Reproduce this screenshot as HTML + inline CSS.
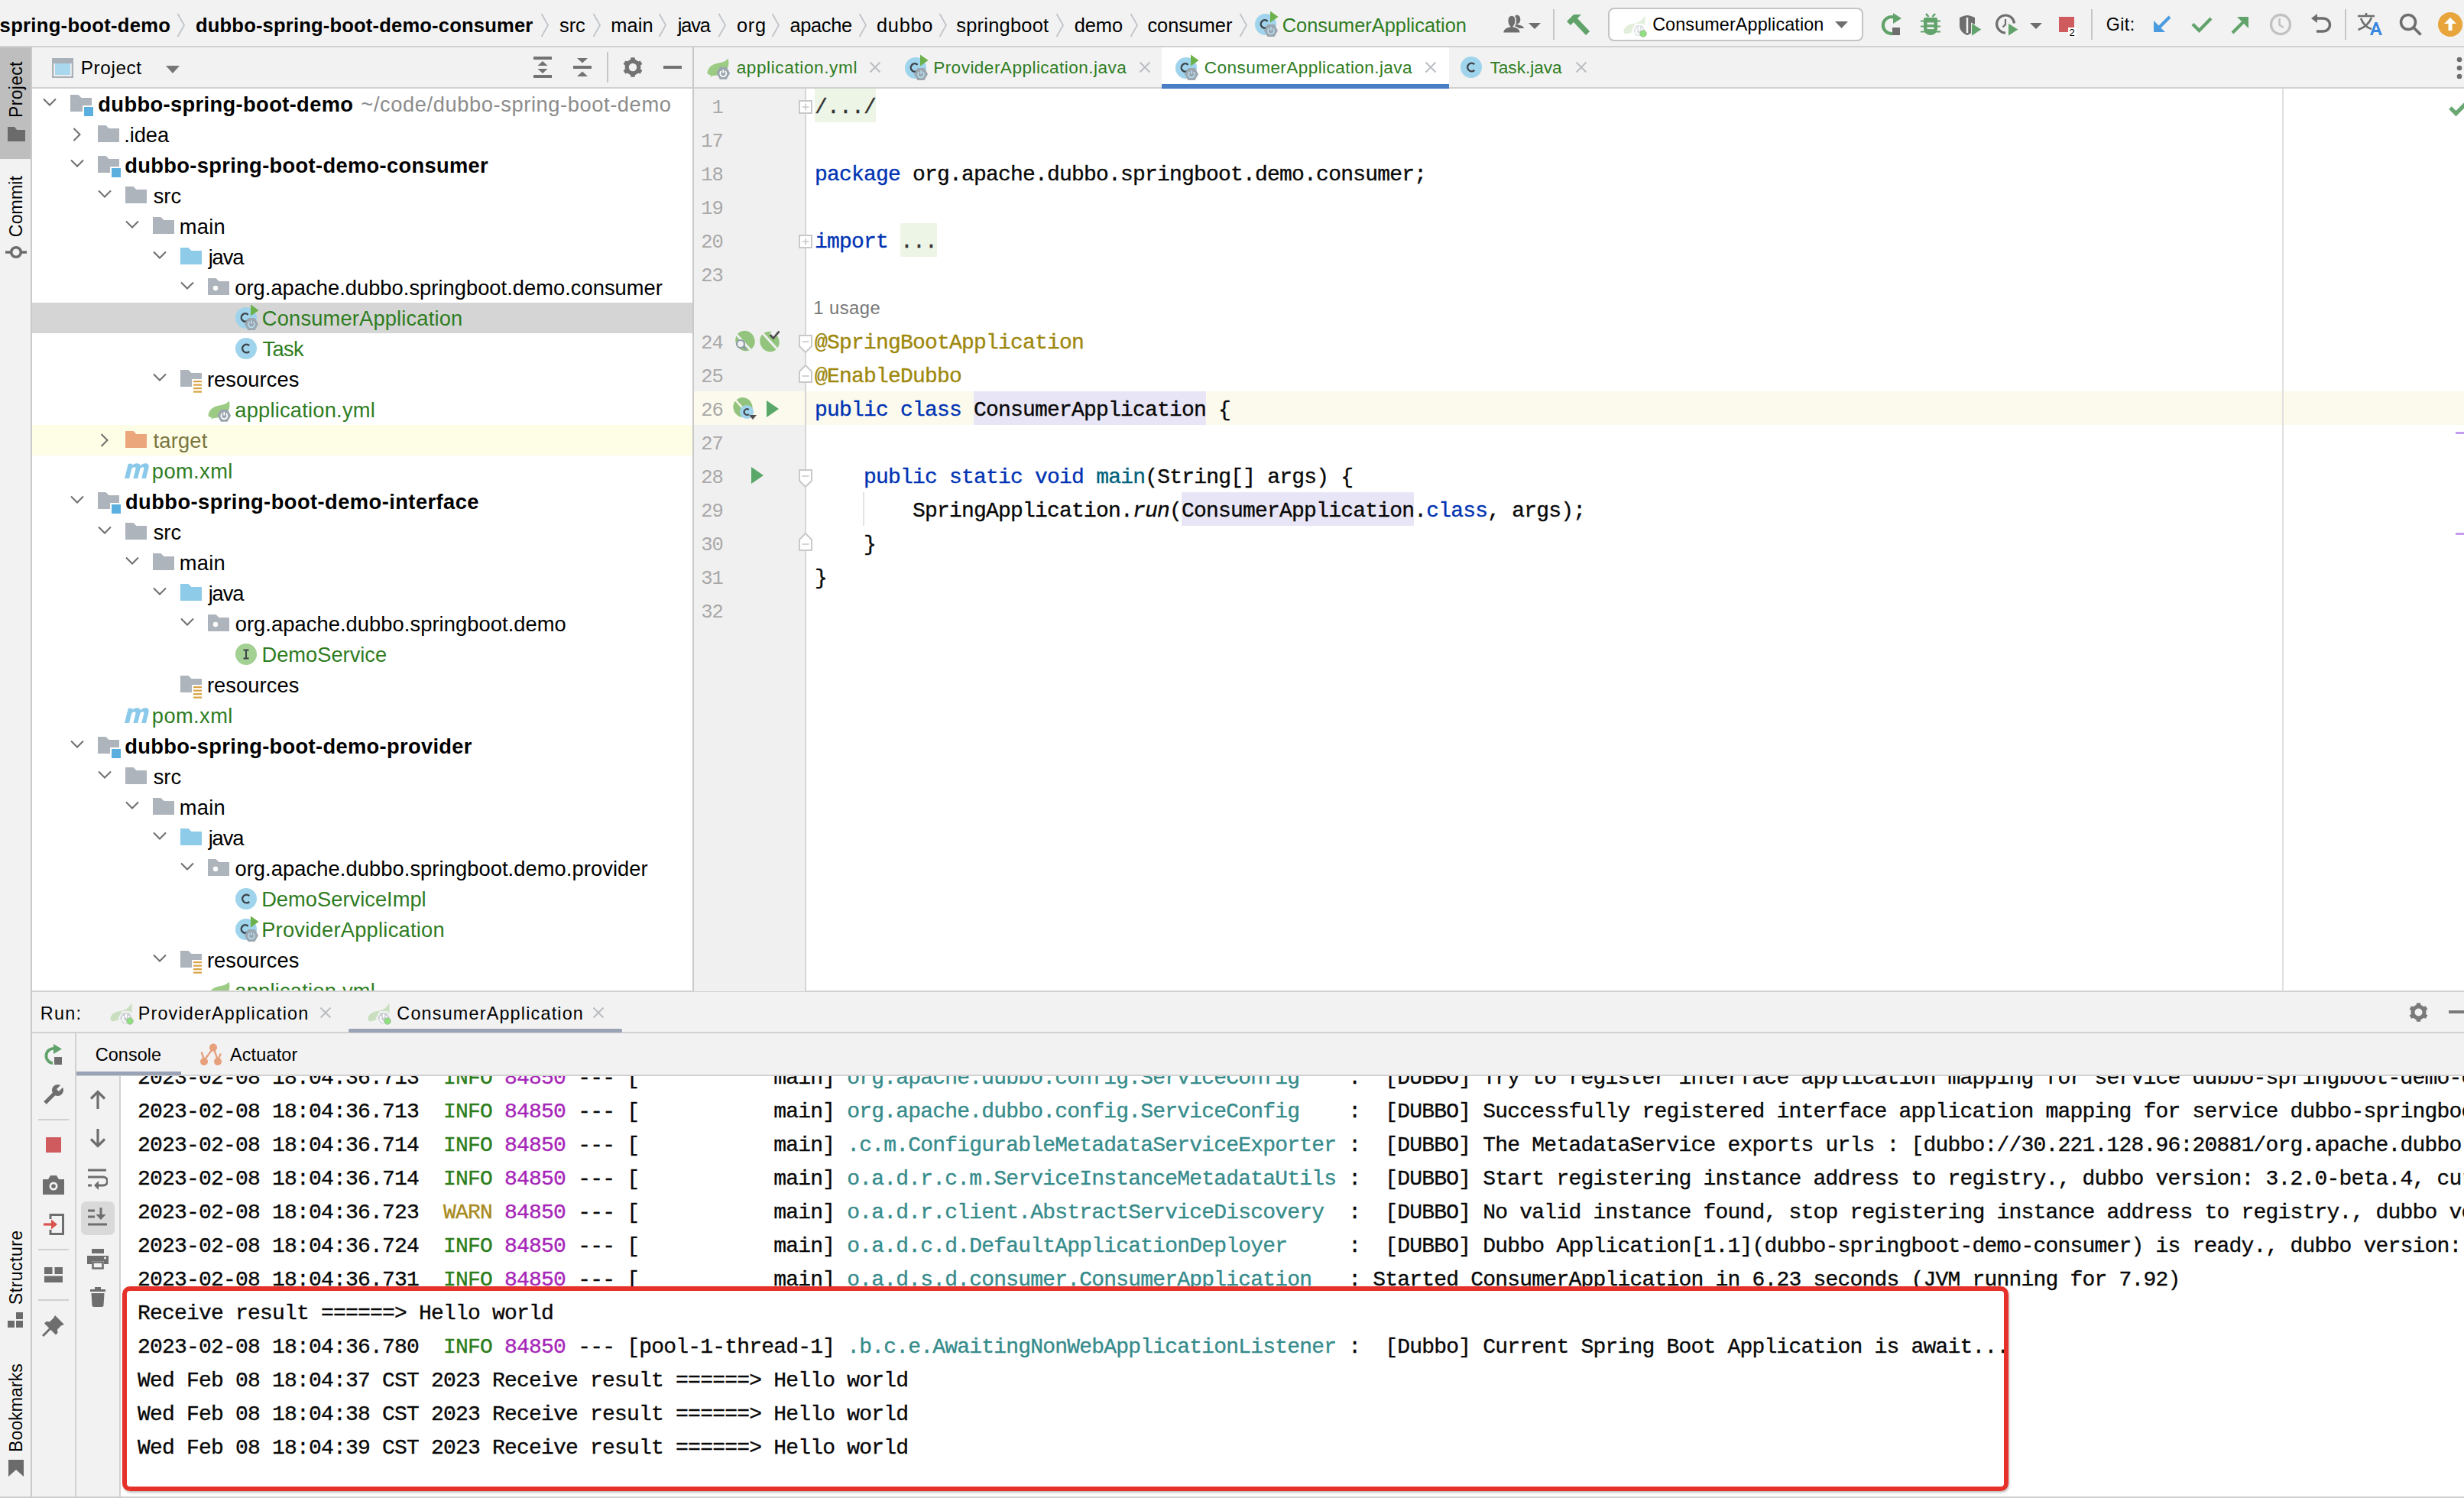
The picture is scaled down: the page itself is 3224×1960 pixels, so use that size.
<!DOCTYPE html>
<html><head><meta charset="utf-8"><style>
html,body{margin:0;padding:0;}
body{width:3224px;height:1960px;overflow:hidden;position:relative;background:#f2f2f2;font-family:'Liberation Sans',sans-serif;}
div,svg{position:absolute;}
.t{white-space:pre;line-height:normal;}
.m{-webkit-text-stroke:0.35px currentColor;}
</style></head><body>
<div style="left:0px;top:0px;width:3224px;height:60px;background:#f2f2f2;"></div>
<div style="left:0px;top:60px;width:3224px;height:2px;background:#d1d1d1;"></div>
<div style="left:0px;top:62px;width:40px;height:1896px;background:#f2f2f2;"></div>
<div style="left:40px;top:62px;width:2px;height:1896px;background:#c9c9c9;"></div>
<div style="left:0px;top:62px;width:40px;height:146px;background:#bebebe;"></div>
<div style="left:42px;top:62px;width:864px;height:53px;background:#f2f2f2;"></div>
<div style="left:42px;top:114px;width:864px;height:2px;background:#d1d1d1;"></div>
<div style="left:42px;top:116px;width:864px;height:1181px;background:#ffffff;"></div>
<div style="left:906px;top:62px;width:2px;height:1235px;background:#c9c9c9;"></div>
<div style="left:908px;top:62px;width:2316px;height:52px;background:#f2f2f2;"></div>
<div style="left:908px;top:114px;width:2316px;height:2px;background:#d1d1d1;"></div>
<div style="left:908px;top:116px;width:2316px;height:1181px;background:#ffffff;"></div>
<div style="left:42px;top:1296px;width:3182px;height:2px;background:#d1d1d1;"></div>
<div style="left:42px;top:1298px;width:3182px;height:52px;background:#f2f2f2;"></div>
<div style="left:42px;top:1350px;width:3182px;height:2px;background:#d1d1d1;"></div>
<div style="left:42px;top:1352px;width:58px;height:606px;background:#f2f2f2;"></div>
<div style="left:98px;top:1352px;width:2px;height:606px;background:#d1d1d1;"></div>
<div style="left:100px;top:1352px;width:3124px;height:54px;background:#f2f2f2;"></div>
<div style="left:100px;top:1406px;width:3124px;height:2px;background:#d1d1d1;"></div>
<div style="left:100px;top:1408px;width:57px;height:550px;background:#f2f2f2;"></div>
<div style="left:156px;top:1408px;width:2px;height:550px;background:#d1d1d1;"></div>
<div style="left:158px;top:1408px;width:3066px;height:550px;background:#ffffff;"></div>
<div style="left:0px;top:1958px;width:3224px;height:2px;background:#cfcfcf;"></div>
<div class="t" style="left:-0.39600000000000013px;top:18.95px;font-family:'Liberation Sans', sans-serif;font-size:25.6px;color:#000;font-weight:bold;letter-spacing:0.294px;">spring-boot-demo</div>
<svg style="left:231px;top:17px;" width="12" height="32" viewBox="0 0 12 32"><path d="M1.5 1 L10 16 L1.5 31" fill="none" stroke="#bfc4ca" stroke-width="1.8"/></svg>
<div class="t" style="left:255.976px;top:18.95px;font-family:'Liberation Sans', sans-serif;font-size:25.6px;color:#000;font-weight:bold;letter-spacing:0.160px;">dubbo-spring-boot-demo-consumer</div>
<svg style="left:707px;top:17px;" width="12" height="32" viewBox="0 0 12 32"><path d="M1.5 1 L10 16 L1.5 31" fill="none" stroke="#bfc4ca" stroke-width="1.8"/></svg>
<div class="t" style="left:732.1015px;top:19.13px;font-family:'Liberation Sans', sans-serif;font-size:25.4px;color:#000;font-weight:normal;letter-spacing:-0.124px;">src</div>
<svg style="left:775px;top:17px;" width="12" height="32" viewBox="0 0 12 32"><path d="M1.5 1 L10 16 L1.5 31" fill="none" stroke="#bfc4ca" stroke-width="1.8"/></svg>
<div class="t" style="left:799.2855px;top:19.13px;font-family:'Liberation Sans', sans-serif;font-size:25.4px;color:#000;font-weight:normal;letter-spacing:0.083px;">main</div>
<svg style="left:861px;top:17px;" width="12" height="32" viewBox="0 0 12 32"><path d="M1.5 1 L10 16 L1.5 31" fill="none" stroke="#bfc4ca" stroke-width="1.8"/></svg>
<div class="t" style="left:886.635px;top:19.13px;font-family:'Liberation Sans', sans-serif;font-size:25.4px;color:#000;font-weight:normal;letter-spacing:-1.081px;">java</div>
<svg style="left:939px;top:17px;" width="12" height="32" viewBox="0 0 12 32"><path d="M1.5 1 L10 16 L1.5 31" fill="none" stroke="#bfc4ca" stroke-width="1.8"/></svg>
<div class="t" style="left:963.9205px;top:19.13px;font-family:'Liberation Sans', sans-serif;font-size:25.4px;color:#000;font-weight:normal;letter-spacing:0.782px;">org</div>
<svg style="left:1009px;top:17px;" width="12" height="32" viewBox="0 0 12 32"><path d="M1.5 1 L10 16 L1.5 31" fill="none" stroke="#bfc4ca" stroke-width="1.8"/></svg>
<div class="t" style="left:1033.6205px;top:19.13px;font-family:'Liberation Sans', sans-serif;font-size:25.4px;color:#000;font-weight:normal;letter-spacing:-0.371px;">apache</div>
<svg style="left:1123px;top:17px;" width="12" height="32" viewBox="0 0 12 32"><path d="M1.5 1 L10 16 L1.5 31" fill="none" stroke="#bfc4ca" stroke-width="1.8"/></svg>
<div class="t" style="left:1146.9205px;top:19.13px;font-family:'Liberation Sans', sans-serif;font-size:25.4px;color:#000;font-weight:normal;letter-spacing:0.746px;">dubbo</div>
<svg style="left:1228px;top:17px;" width="12" height="32" viewBox="0 0 12 32"><path d="M1.5 1 L10 16 L1.5 31" fill="none" stroke="#bfc4ca" stroke-width="1.8"/></svg>
<div class="t" style="left:1251.3015px;top:19.13px;font-family:'Liberation Sans', sans-serif;font-size:25.4px;color:#000;font-weight:normal;letter-spacing:0.252px;">springboot</div>
<svg style="left:1381px;top:17px;" width="12" height="32" viewBox="0 0 12 32"><path d="M1.5 1 L10 16 L1.5 31" fill="none" stroke="#bfc4ca" stroke-width="1.8"/></svg>
<div class="t" style="left:1405.7205px;top:19.13px;font-family:'Liberation Sans', sans-serif;font-size:25.4px;color:#000;font-weight:normal;letter-spacing:-0.068px;">demo</div>
<svg style="left:1478px;top:17px;" width="12" height="32" viewBox="0 0 12 32"><path d="M1.5 1 L10 16 L1.5 31" fill="none" stroke="#bfc4ca" stroke-width="1.8"/></svg>
<div class="t" style="left:1501.5204999999999px;top:19.13px;font-family:'Liberation Sans', sans-serif;font-size:25.4px;color:#000;font-weight:normal;letter-spacing:-0.092px;">consumer</div>
<svg style="left:1621px;top:17px;" width="12" height="32" viewBox="0 0 12 32"><path d="M1.5 1 L10 16 L1.5 31" fill="none" stroke="#bfc4ca" stroke-width="1.8"/></svg>
<div class="t" style="left:1677.73px;top:19.13px;font-family:'Liberation Sans', sans-serif;font-size:25.4px;color:#2f7d1f;font-weight:normal;letter-spacing:-0.004px;">ConsumerApplication</div>
<div class="t" style="left:2755.84px;top:19.16px;font-family:'Liberation Sans', sans-serif;font-size:23.2px;color:#000;font-weight:normal;letter-spacing:0.391px;">Git:</div>
<div style="left:2104px;top:10px;width:334px;height:44px;background:#ffffff;border:2px solid #c4c4c4;border-radius:8px;box-sizing:border-box;"></div>
<div class="t" style="left:2162.13px;top:18.97px;font-family:'Liberation Sans', sans-serif;font-size:23.4px;color:#000;font-weight:normal;letter-spacing:0.106px;">ConsumerApplication</div>
<div class="t" style="left:105.79525px;top:75.44px;font-family:'Liberation Sans', sans-serif;font-size:24.3px;color:#000;font-weight:normal;letter-spacing:0.609px;">Project</div>
<div style="left:42px;top:396px;width:864px;height:40px;background:#d5d5d5;"></div>
<div style="left:42px;top:556px;width:864px;height:40px;background:#fefde6;"></div>
<div style="left:0;top:0;width:906px;height:1296px;overflow:hidden">
<svg style="left:56px;top:128px;" width="18" height="12" viewBox="0 0 18 12"><path d="M1 1.5 L9 9.5 L17 1.5" fill="none" stroke="#6e6e6e" stroke-width="2"/></svg>
<svg style="left:92px;top:124px;" width="32" height="30" viewBox="0 0 32 30"><path d="M0 0 H10.5 L14.5 4 H28 V14 H16 V22 H0 Z" fill="#aeb4bc"/><rect x="18" y="16" width="12" height="12" fill="#5aafde"/></svg>
<div class="t" style="left:128.308px;top:121.18px;font-family:'Liberation Sans', sans-serif;font-size:27.3px;color:#000;font-weight:bold;letter-spacing:0.369px;">dubbo-spring-boot-demo</div>
<div class="t" style="left:472.3715px;top:121.18px;font-family:'Liberation Sans', sans-serif;font-size:27.3px;color:#8c8c8c;font-weight:normal;letter-spacing:0.582px;">~/code/dubbo-spring-boot-demo</div>
<svg style="left:95px;top:167px;" width="12" height="18" viewBox="0 0 12 18"><path d="M1.5 1 L9.5 9 L1.5 17" fill="none" stroke="#6e6e6e" stroke-width="2"/></svg>
<svg style="left:128px;top:164px;" width="28" height="22" viewBox="0 0 28 22"><path d="M0 0 H10.5 L14.5 4 H28 V22 H0 Z" fill="#aeb4bc"/></svg>
<div class="t" style="left:162.143px;top:161.18px;font-family:'Liberation Sans', sans-serif;font-size:27.3px;color:#000;font-weight:normal;letter-spacing:-0.046px;">.idea</div>
<svg style="left:92px;top:208px;" width="18" height="12" viewBox="0 0 18 12"><path d="M1 1.5 L9 9.5 L17 1.5" fill="none" stroke="#6e6e6e" stroke-width="2"/></svg>
<svg style="left:128px;top:204px;" width="32" height="30" viewBox="0 0 32 30"><path d="M0 0 H10.5 L14.5 4 H28 V14 H16 V22 H0 Z" fill="#aeb4bc"/><rect x="18" y="16" width="12" height="12" fill="#5aafde"/></svg>
<div class="t" style="left:163.308px;top:201.18px;font-family:'Liberation Sans', sans-serif;font-size:27.3px;color:#000;font-weight:bold;letter-spacing:0.330px;">dubbo-spring-boot-demo-consumer</div>
<svg style="left:128px;top:248px;" width="18" height="12" viewBox="0 0 18 12"><path d="M1 1.5 L9 9.5 L17 1.5" fill="none" stroke="#6e6e6e" stroke-width="2"/></svg>
<svg style="left:164px;top:244px;" width="28" height="22" viewBox="0 0 28 22"><path d="M0 0 H10.5 L14.5 4 H28 V22 H0 Z" fill="#aeb4bc"/></svg>
<div class="t" style="left:200.74925px;top:241.18px;font-family:'Liberation Sans', sans-serif;font-size:27.3px;color:#000;font-weight:normal;letter-spacing:-0.038px;">src</div>
<svg style="left:164px;top:288px;" width="18" height="12" viewBox="0 0 18 12"><path d="M1 1.5 L9 9.5 L17 1.5" fill="none" stroke="#6e6e6e" stroke-width="2"/></svg>
<svg style="left:200px;top:284px;" width="28" height="22" viewBox="0 0 28 22"><path d="M0 0 H10.5 L14.5 4 H28 V22 H0 Z" fill="#aeb4bc"/></svg>
<div class="t" style="left:234.75725px;top:281.18px;font-family:'Liberation Sans', sans-serif;font-size:27.3px;color:#000;font-weight:normal;letter-spacing:0.259px;">main</div>
<svg style="left:200px;top:328px;" width="18" height="12" viewBox="0 0 18 12"><path d="M1 1.5 L9 9.5 L17 1.5" fill="none" stroke="#6e6e6e" stroke-width="2"/></svg>
<svg style="left:236px;top:324px;" width="28" height="22" viewBox="0 0 28 22"><path d="M0 0 H10.5 L14.5 4 H28 V22 H0 Z" fill="#8ecbe9"/></svg>
<div class="t" style="left:272.6825px;top:321.18px;font-family:'Liberation Sans', sans-serif;font-size:27.3px;color:#000;font-weight:normal;letter-spacing:-1.126px;">java</div>
<svg style="left:236px;top:368px;" width="18" height="12" viewBox="0 0 18 12"><path d="M1 1.5 L9 9.5 L17 1.5" fill="none" stroke="#6e6e6e" stroke-width="2"/></svg>
<svg style="left:272px;top:364px;" width="28" height="22" viewBox="0 0 28 22"><path d="M0 0 H10.5 L14.5 4 H28 V22 H0 Z" fill="#aeb4bc"/><circle cx="10" cy="13" r="3.2" fill="#fff"/></svg>
<div class="t" style="left:307.23974999999996px;top:361.18px;font-family:'Liberation Sans', sans-serif;font-size:27.3px;color:#000;font-weight:normal;letter-spacing:0.030px;">org.apache.dubbo.springboot.demo.consumer</div>
<svg style="left:308px;top:398px;" width="34" height="36" viewBox="0 0 34 36"><circle cx="14" cy="18" r="14" fill="#9fd4ec"/><path d="M16.6 13.8 A5.2 5.2 0 1 0 16.6 21.2" fill="none" stroke="#3d4248" stroke-width="2.4"/><path d="M20 0.5 L30.5 8 L20 15.5 Z" fill="#6cb14b"/><path d="M12 26 L16.5 18 L25.5 18 L30 26 L25.5 34 L16.5 34 Z" fill="#9ba6af"/><path d="M18.6 23.2 A4 4 0 1 0 23.4 23.2" fill="none" stroke="#b5dbef" stroke-width="1.7"/><path d="M21 21.2 V25.8" stroke="#b5dbef" stroke-width="1.7"/></svg>
<div class="t" style="left:342.835px;top:401.18px;font-family:'Liberation Sans', sans-serif;font-size:27.3px;color:#2f7d1f;font-weight:normal;letter-spacing:0.160px;">ConsumerApplication</div>
<svg style="left:308px;top:442px;" width="28" height="28" viewBox="0 0 28 28"><circle cx="14" cy="14" r="14" fill="#9fd4ec"/><path d="M18.2 10.2 A5.3 5.3 0 1 0 18.2 17.8" fill="none" stroke="#3d4248" stroke-width="2.4"/></svg>
<div class="t" style="left:343.58574999999996px;top:441.18px;font-family:'Liberation Sans', sans-serif;font-size:27.3px;color:#2f7d1f;font-weight:normal;letter-spacing:-0.662px;">Task</div>
<svg style="left:200px;top:488px;" width="18" height="12" viewBox="0 0 18 12"><path d="M1 1.5 L9 9.5 L17 1.5" fill="none" stroke="#6e6e6e" stroke-width="2"/></svg>
<svg style="left:236px;top:484px;" width="32" height="30" viewBox="0 0 32 30"><path d="M0 0 H10.5 L14.5 4 H28 V12 H15 V22 H0 Z" fill="#aeb4bc"/><g fill="#d9a343"><rect x="17" y="14" width="11" height="2.2"/><rect x="17" y="18.5" width="11" height="2.2"/><rect x="17" y="23" width="11" height="2.2"/><rect x="17" y="27.5" width="11" height="2.2"/></g></svg>
<div class="t" style="left:270.9255px;top:481.18px;font-family:'Liberation Sans', sans-serif;font-size:27.3px;color:#000;font-weight:normal;letter-spacing:0.073px;">resources</div>
<svg style="left:272px;top:523px;" width="32" height="30" viewBox="0 0 32 30"><path d="M0.5 21 C1 13 7 9 15 7.5 C21 6.5 25 5 27.5 1.5 C29.5 7 28.5 14 24 18 C20 21.5 14 24 8 24 L4 25.5 L5 23 C3 23 1.5 22.5 0.5 21 Z" fill="#9ccb84"/><path d="M12.5 20.8 L16.9 12.8 L25.7 12.8 L30.1 20.8 L25.7 28.8 L16.9 28.8 Z" fill="#9ba6af"/><path d="M18.9 18 A4 4 0 1 0 23.7 18" fill="none" stroke="#fff" stroke-width="1.7"/><path d="M21.3 16 V20.6" stroke="#fff" stroke-width="1.7"/></svg>
<div class="t" style="left:307.23974999999996px;top:521.18px;font-family:'Liberation Sans', sans-serif;font-size:27.3px;color:#2f7d1f;font-weight:normal;letter-spacing:0.215px;">application.yml</div>
<svg style="left:131px;top:567px;" width="12" height="18" viewBox="0 0 12 18"><path d="M1.5 1 L9.5 9 L1.5 17" fill="none" stroke="#6e6e6e" stroke-width="2"/></svg>
<svg style="left:164px;top:564px;" width="28" height="22" viewBox="0 0 28 22"><path d="M0 0 H10.5 L14.5 4 H28 V22 H0 Z" fill="#eba77b"/></svg>
<div class="t" style="left:200.4905px;top:561.18px;font-family:'Liberation Sans', sans-serif;font-size:27.3px;color:#7b7640;font-weight:normal;letter-spacing:0.199px;">target</div>
<svg style="left:162.5px;top:606px;" width="34" height="20" viewBox="0 0 34 20"><path transform="translate(5 0) skewX(-14)" d="M0 20 V0.8 H5.6 V3 C7 1.3 9 0.3 11.5 0.3 C14 0.3 15.6 1.5 16.5 3.2 C18 1.3 20 0.3 22.5 0.3 C26 0.3 28 2.5 28 6.5 V20 H22.2 V8 C22.2 6.2 21.4 5.3 20 5.3 C18.5 5.3 17.2 6.4 17.2 8.2 V20 H11.4 V8 C11.4 6.2 10.6 5.3 9.2 5.3 C7.7 5.3 6.1 6.4 6.1 8.2 V20 Z" fill="#8ac9e9"/></svg>
<div class="t" style="left:198.8255px;top:601.18px;font-family:'Liberation Sans', sans-serif;font-size:27.3px;color:#2f7d1f;font-weight:normal;letter-spacing:0.399px;">pom.xml</div>
<svg style="left:92px;top:648px;" width="18" height="12" viewBox="0 0 18 12"><path d="M1 1.5 L9 9.5 L17 1.5" fill="none" stroke="#6e6e6e" stroke-width="2"/></svg>
<svg style="left:128px;top:644px;" width="32" height="30" viewBox="0 0 32 30"><path d="M0 0 H10.5 L14.5 4 H28 V14 H16 V22 H0 Z" fill="#aeb4bc"/><rect x="18" y="16" width="12" height="12" fill="#5aafde"/></svg>
<div class="t" style="left:163.908px;top:641.18px;font-family:'Liberation Sans', sans-serif;font-size:27.3px;color:#000;font-weight:bold;letter-spacing:0.445px;">dubbo-spring-boot-demo-interface</div>
<svg style="left:128px;top:688px;" width="18" height="12" viewBox="0 0 18 12"><path d="M1 1.5 L9 9.5 L17 1.5" fill="none" stroke="#6e6e6e" stroke-width="2"/></svg>
<svg style="left:164px;top:684px;" width="28" height="22" viewBox="0 0 28 22"><path d="M0 0 H10.5 L14.5 4 H28 V22 H0 Z" fill="#aeb4bc"/></svg>
<div class="t" style="left:200.74925px;top:681.18px;font-family:'Liberation Sans', sans-serif;font-size:27.3px;color:#000;font-weight:normal;letter-spacing:-0.038px;">src</div>
<svg style="left:164px;top:728px;" width="18" height="12" viewBox="0 0 18 12"><path d="M1 1.5 L9 9.5 L17 1.5" fill="none" stroke="#6e6e6e" stroke-width="2"/></svg>
<svg style="left:200px;top:724px;" width="28" height="22" viewBox="0 0 28 22"><path d="M0 0 H10.5 L14.5 4 H28 V22 H0 Z" fill="#aeb4bc"/></svg>
<div class="t" style="left:234.75725px;top:721.18px;font-family:'Liberation Sans', sans-serif;font-size:27.3px;color:#000;font-weight:normal;letter-spacing:0.259px;">main</div>
<svg style="left:200px;top:768px;" width="18" height="12" viewBox="0 0 18 12"><path d="M1 1.5 L9 9.5 L17 1.5" fill="none" stroke="#6e6e6e" stroke-width="2"/></svg>
<svg style="left:236px;top:764px;" width="28" height="22" viewBox="0 0 28 22"><path d="M0 0 H10.5 L14.5 4 H28 V22 H0 Z" fill="#8ecbe9"/></svg>
<div class="t" style="left:272.6825px;top:761.18px;font-family:'Liberation Sans', sans-serif;font-size:27.3px;color:#000;font-weight:normal;letter-spacing:-1.126px;">java</div>
<svg style="left:236px;top:808px;" width="18" height="12" viewBox="0 0 18 12"><path d="M1 1.5 L9 9.5 L17 1.5" fill="none" stroke="#6e6e6e" stroke-width="2"/></svg>
<svg style="left:272px;top:804px;" width="28" height="22" viewBox="0 0 28 22"><path d="M0 0 H10.5 L14.5 4 H28 V22 H0 Z" fill="#aeb4bc"/><circle cx="10" cy="13" r="3.2" fill="#fff"/></svg>
<div class="t" style="left:307.63975px;top:801.18px;font-family:'Liberation Sans', sans-serif;font-size:27.3px;color:#000;font-weight:normal;letter-spacing:0.070px;">org.apache.dubbo.springboot.demo</div>
<svg style="left:308px;top:842px;" width="28" height="28" viewBox="0 0 28 28"><circle cx="14" cy="14" r="14" fill="#a3d193"/><path d="M10.5 8.5 H17.5 M14 8.5 V19.5 M10.5 19.5 H17.5" stroke="#3d4248" stroke-width="2"/></svg>
<div class="t" style="left:342.44775px;top:841.18px;font-family:'Liberation Sans', sans-serif;font-size:27.3px;color:#2f7d1f;font-weight:normal;letter-spacing:-0.009px;">DemoService</div>
<svg style="left:236px;top:884px;" width="32" height="30" viewBox="0 0 32 30"><path d="M0 0 H10.5 L14.5 4 H28 V12 H15 V22 H0 Z" fill="#aeb4bc"/><g fill="#d9a343"><rect x="17" y="14" width="11" height="2.2"/><rect x="17" y="18.5" width="11" height="2.2"/><rect x="17" y="23" width="11" height="2.2"/><rect x="17" y="27.5" width="11" height="2.2"/></g></svg>
<div class="t" style="left:270.9255px;top:881.18px;font-family:'Liberation Sans', sans-serif;font-size:27.3px;color:#000;font-weight:normal;letter-spacing:0.073px;">resources</div>
<svg style="left:162.5px;top:926px;" width="34" height="20" viewBox="0 0 34 20"><path transform="translate(5 0) skewX(-14)" d="M0 20 V0.8 H5.6 V3 C7 1.3 9 0.3 11.5 0.3 C14 0.3 15.6 1.5 16.5 3.2 C18 1.3 20 0.3 22.5 0.3 C26 0.3 28 2.5 28 6.5 V20 H22.2 V8 C22.2 6.2 21.4 5.3 20 5.3 C18.5 5.3 17.2 6.4 17.2 8.2 V20 H11.4 V8 C11.4 6.2 10.6 5.3 9.2 5.3 C7.7 5.3 6.1 6.4 6.1 8.2 V20 Z" fill="#8ac9e9"/></svg>
<div class="t" style="left:198.8255px;top:921.18px;font-family:'Liberation Sans', sans-serif;font-size:27.3px;color:#2f7d1f;font-weight:normal;letter-spacing:0.399px;">pom.xml</div>
<svg style="left:92px;top:968px;" width="18" height="12" viewBox="0 0 18 12"><path d="M1 1.5 L9 9.5 L17 1.5" fill="none" stroke="#6e6e6e" stroke-width="2"/></svg>
<svg style="left:128px;top:964px;" width="32" height="30" viewBox="0 0 32 30"><path d="M0 0 H10.5 L14.5 4 H28 V14 H16 V22 H0 Z" fill="#aeb4bc"/><rect x="18" y="16" width="12" height="12" fill="#5aafde"/></svg>
<div class="t" style="left:163.308px;top:961.18px;font-family:'Liberation Sans', sans-serif;font-size:27.3px;color:#000;font-weight:bold;letter-spacing:0.331px;">dubbo-spring-boot-demo-provider</div>
<svg style="left:128px;top:1008px;" width="18" height="12" viewBox="0 0 18 12"><path d="M1 1.5 L9 9.5 L17 1.5" fill="none" stroke="#6e6e6e" stroke-width="2"/></svg>
<svg style="left:164px;top:1004px;" width="28" height="22" viewBox="0 0 28 22"><path d="M0 0 H10.5 L14.5 4 H28 V22 H0 Z" fill="#aeb4bc"/></svg>
<div class="t" style="left:200.74925px;top:1001.18px;font-family:'Liberation Sans', sans-serif;font-size:27.3px;color:#000;font-weight:normal;letter-spacing:-0.038px;">src</div>
<svg style="left:164px;top:1048px;" width="18" height="12" viewBox="0 0 18 12"><path d="M1 1.5 L9 9.5 L17 1.5" fill="none" stroke="#6e6e6e" stroke-width="2"/></svg>
<svg style="left:200px;top:1044px;" width="28" height="22" viewBox="0 0 28 22"><path d="M0 0 H10.5 L14.5 4 H28 V22 H0 Z" fill="#aeb4bc"/></svg>
<div class="t" style="left:234.75725px;top:1041.18px;font-family:'Liberation Sans', sans-serif;font-size:27.3px;color:#000;font-weight:normal;letter-spacing:0.259px;">main</div>
<svg style="left:200px;top:1088px;" width="18" height="12" viewBox="0 0 18 12"><path d="M1 1.5 L9 9.5 L17 1.5" fill="none" stroke="#6e6e6e" stroke-width="2"/></svg>
<svg style="left:236px;top:1084px;" width="28" height="22" viewBox="0 0 28 22"><path d="M0 0 H10.5 L14.5 4 H28 V22 H0 Z" fill="#8ecbe9"/></svg>
<div class="t" style="left:272.6825px;top:1081.18px;font-family:'Liberation Sans', sans-serif;font-size:27.3px;color:#000;font-weight:normal;letter-spacing:-1.126px;">java</div>
<svg style="left:236px;top:1128px;" width="18" height="12" viewBox="0 0 18 12"><path d="M1 1.5 L9 9.5 L17 1.5" fill="none" stroke="#6e6e6e" stroke-width="2"/></svg>
<svg style="left:272px;top:1124px;" width="28" height="22" viewBox="0 0 28 22"><path d="M0 0 H10.5 L14.5 4 H28 V22 H0 Z" fill="#aeb4bc"/><circle cx="10" cy="13" r="3.2" fill="#fff"/></svg>
<div class="t" style="left:307.43975px;top:1121.18px;font-family:'Liberation Sans', sans-serif;font-size:27.3px;color:#000;font-weight:normal;letter-spacing:0.075px;">org.apache.dubbo.springboot.demo.provider</div>
<svg style="left:308px;top:1162px;" width="28" height="28" viewBox="0 0 28 28"><circle cx="14" cy="14" r="14" fill="#9fd4ec"/><path d="M18.2 10.2 A5.3 5.3 0 1 0 18.2 17.8" fill="none" stroke="#3d4248" stroke-width="2.4"/></svg>
<div class="t" style="left:342.14775px;top:1161.18px;font-family:'Liberation Sans', sans-serif;font-size:27.3px;color:#2f7d1f;font-weight:normal;letter-spacing:0.009px;">DemoServiceImpl</div>
<svg style="left:308px;top:1198px;" width="34" height="36" viewBox="0 0 34 36"><circle cx="14" cy="18" r="14" fill="#9fd4ec"/><path d="M16.6 13.8 A5.2 5.2 0 1 0 16.6 21.2" fill="none" stroke="#3d4248" stroke-width="2.4"/><path d="M20 0.5 L30.5 8 L20 15.5 Z" fill="#6cb14b"/><path d="M12 26 L16.5 18 L25.5 18 L30 26 L25.5 34 L16.5 34 Z" fill="#9ba6af"/><path d="M18.6 23.2 A4 4 0 1 0 23.4 23.2" fill="none" stroke="#b5dbef" stroke-width="1.7"/><path d="M21 21.2 V25.8" stroke="#b5dbef" stroke-width="1.7"/></svg>
<div class="t" style="left:342.14775px;top:1201.18px;font-family:'Liberation Sans', sans-serif;font-size:27.3px;color:#2f7d1f;font-weight:normal;letter-spacing:0.243px;">ProviderApplication</div>
<svg style="left:200px;top:1248px;" width="18" height="12" viewBox="0 0 18 12"><path d="M1 1.5 L9 9.5 L17 1.5" fill="none" stroke="#6e6e6e" stroke-width="2"/></svg>
<svg style="left:236px;top:1244px;" width="32" height="30" viewBox="0 0 32 30"><path d="M0 0 H10.5 L14.5 4 H28 V12 H15 V22 H0 Z" fill="#aeb4bc"/><g fill="#d9a343"><rect x="17" y="14" width="11" height="2.2"/><rect x="17" y="18.5" width="11" height="2.2"/><rect x="17" y="23" width="11" height="2.2"/><rect x="17" y="27.5" width="11" height="2.2"/></g></svg>
<div class="t" style="left:270.9255px;top:1241.18px;font-family:'Liberation Sans', sans-serif;font-size:27.3px;color:#000;font-weight:normal;letter-spacing:0.073px;">resources</div>
<svg style="left:272px;top:1283px;" width="32" height="30" viewBox="0 0 32 30"><path d="M0.5 21 C1 13 7 9 15 7.5 C21 6.5 25 5 27.5 1.5 C29.5 7 28.5 14 24 18 C20 21.5 14 24 8 24 L4 25.5 L5 23 C3 23 1.5 22.5 0.5 21 Z" fill="#9ccb84"/><path d="M12.5 20.8 L16.9 12.8 L25.7 12.8 L30.1 20.8 L25.7 28.8 L16.9 28.8 Z" fill="#9ba6af"/><path d="M18.9 18 A4 4 0 1 0 23.7 18" fill="none" stroke="#fff" stroke-width="1.7"/><path d="M21.3 16 V20.6" stroke="#fff" stroke-width="1.7"/></svg>
<div class="t" style="left:307.23974999999996px;top:1281.18px;font-family:'Liberation Sans', sans-serif;font-size:27.3px;color:#2f7d1f;font-weight:normal;letter-spacing:0.215px;">application.yml</div>
</div>
<div style="left:908px;top:116px;width:145px;height:1181px;background:#f0f0f0;"></div>
<div style="left:1053px;top:116px;width:2px;height:1181px;background:#d6d6d6;"></div>
<div style="left:908px;top:512px;width:2316px;height:44px;background:#fcfaed;"></div>
<div style="left:1053px;top:512px;width:2px;height:44px;background:#d6d6d6;"></div>
<div style="left:2986px;top:116px;width:2px;height:1181px;background:#e0e0e0;"></div>
<div style="left:1066px;top:116px;width:80px;height:44px;background:#edf5e6;"></div>
<div style="left:1178px;top:292px;width:48px;height:44px;background:#edf5e6;"></div>
<div style="left:1274px;top:512px;width:304px;height:44px;background:#e8e6f6;"></div>
<div style="left:1546px;top:644px;width:304px;height:44px;background:#e8e6f6;"></div>
<div style="left:1129px;top:644px;width:2px;height:44px;background:#e3e3e3;"></div>
<div class="t m" style="left:1066px;top:124.78px;font-family:'Liberation Mono', monospace;font-size:28px;letter-spacing:-0.8px;color:#080808"><span style="color:#333">/.../</span></div>
<div class="t m" style="left:1066px;top:212.78px;font-family:'Liberation Mono', monospace;font-size:28px;letter-spacing:-0.8px;color:#080808"><span style="color:#0033b3">package</span> org.apache.dubbo.springboot.demo.consumer;</div>
<div class="t m" style="left:1066px;top:300.78px;font-family:'Liberation Mono', monospace;font-size:28px;letter-spacing:-0.8px;color:#080808"><span style="color:#0033b3">import</span> <span style="color:#333">...</span></div>
<div class="t m" style="left:1066px;top:432.78px;font-family:'Liberation Mono', monospace;font-size:28px;letter-spacing:-0.8px;color:#080808"><span style="color:#9e880d">@SpringBootApplication</span></div>
<div class="t m" style="left:1066px;top:476.78px;font-family:'Liberation Mono', monospace;font-size:28px;letter-spacing:-0.8px;color:#080808"><span style="color:#9e880d">@EnableDubbo</span></div>
<div class="t m" style="left:1066px;top:520.78px;font-family:'Liberation Mono', monospace;font-size:28px;letter-spacing:-0.8px;color:#080808"><span style="color:#0033b3">public</span> <span style="color:#0033b3">class</span> ConsumerApplication {</div>
<div class="t m" style="left:1066px;top:608.78px;font-family:'Liberation Mono', monospace;font-size:28px;letter-spacing:-0.8px;color:#080808">    <span style="color:#0033b3">public</span> <span style="color:#0033b3">static</span> <span style="color:#0033b3">void</span> <span style="color:#00627a">main</span>(String[] args) {</div>
<div class="t m" style="left:1066px;top:652.78px;font-family:'Liberation Mono', monospace;font-size:28px;letter-spacing:-0.8px;color:#080808">        SpringApplication.<i>run</i>(ConsumerApplication.<span style="color:#0033b3">class</span>, args);</div>
<div class="t m" style="left:1066px;top:696.78px;font-family:'Liberation Mono', monospace;font-size:28px;letter-spacing:-0.8px;color:#080808">    }</div>
<div class="t m" style="left:1066px;top:740.78px;font-family:'Liberation Mono', monospace;font-size:28px;letter-spacing:-0.8px;color:#080808">}</div>
<div class="t" style="left:1064.215px;top:389.40px;font-family:'Liberation Sans', sans-serif;font-size:23.8px;color:#767676;font-weight:normal;letter-spacing:0.455px;">1 usage</div>
<div class="t" style="left:880px;width:66px;text-align:right;top:127.26px;font-family:'Liberation Mono', monospace;font-size:25.5px;letter-spacing:-0.9px;color:#a8a8a8">1</div>
<div class="t" style="left:880px;width:66px;text-align:right;top:171.26px;font-family:'Liberation Mono', monospace;font-size:25.5px;letter-spacing:-0.9px;color:#a8a8a8">17</div>
<div class="t" style="left:880px;width:66px;text-align:right;top:215.26px;font-family:'Liberation Mono', monospace;font-size:25.5px;letter-spacing:-0.9px;color:#a8a8a8">18</div>
<div class="t" style="left:880px;width:66px;text-align:right;top:259.26px;font-family:'Liberation Mono', monospace;font-size:25.5px;letter-spacing:-0.9px;color:#a8a8a8">19</div>
<div class="t" style="left:880px;width:66px;text-align:right;top:303.26px;font-family:'Liberation Mono', monospace;font-size:25.5px;letter-spacing:-0.9px;color:#a8a8a8">20</div>
<div class="t" style="left:880px;width:66px;text-align:right;top:347.26px;font-family:'Liberation Mono', monospace;font-size:25.5px;letter-spacing:-0.9px;color:#a8a8a8">23</div>
<div class="t" style="left:880px;width:66px;text-align:right;top:435.26px;font-family:'Liberation Mono', monospace;font-size:25.5px;letter-spacing:-0.9px;color:#a8a8a8">24</div>
<div class="t" style="left:880px;width:66px;text-align:right;top:479.26px;font-family:'Liberation Mono', monospace;font-size:25.5px;letter-spacing:-0.9px;color:#a8a8a8">25</div>
<div class="t" style="left:880px;width:66px;text-align:right;top:523.26px;font-family:'Liberation Mono', monospace;font-size:25.5px;letter-spacing:-0.9px;color:#a8a8a8">26</div>
<div class="t" style="left:880px;width:66px;text-align:right;top:567.26px;font-family:'Liberation Mono', monospace;font-size:25.5px;letter-spacing:-0.9px;color:#a8a8a8">27</div>
<div class="t" style="left:880px;width:66px;text-align:right;top:611.26px;font-family:'Liberation Mono', monospace;font-size:25.5px;letter-spacing:-0.9px;color:#a8a8a8">28</div>
<div class="t" style="left:880px;width:66px;text-align:right;top:655.26px;font-family:'Liberation Mono', monospace;font-size:25.5px;letter-spacing:-0.9px;color:#a8a8a8">29</div>
<div class="t" style="left:880px;width:66px;text-align:right;top:699.26px;font-family:'Liberation Mono', monospace;font-size:25.5px;letter-spacing:-0.9px;color:#a8a8a8">30</div>
<div class="t" style="left:880px;width:66px;text-align:right;top:743.26px;font-family:'Liberation Mono', monospace;font-size:25.5px;letter-spacing:-0.9px;color:#a8a8a8">31</div>
<div class="t" style="left:880px;width:66px;text-align:right;top:787.26px;font-family:'Liberation Mono', monospace;font-size:25.5px;letter-spacing:-0.9px;color:#a8a8a8">32</div>
<svg style="left:1045px;top:131px;" width="18" height="18" viewBox="0 0 18 18"><rect x="1" y="1" width="16" height="16" fill="#fff" stroke="#c9c9c9" stroke-width="2"/><path d="M4.5 9 H13.5 M9 4.5 V13.5" stroke="#c9c9c9" stroke-width="1.6"/></svg>
<svg style="left:1045px;top:307px;" width="18" height="18" viewBox="0 0 18 18"><rect x="1" y="1" width="16" height="16" fill="#fff" stroke="#c9c9c9" stroke-width="2"/><path d="M4.5 9 H13.5 M9 4.5 V13.5" stroke="#c9c9c9" stroke-width="1.6"/></svg>
<svg style="left:1045px;top:438px;" width="18" height="24" viewBox="0 0 18 24"><path d="M1 1 H17 V15 L9 23 L1 15 Z" fill="#fff" stroke="#c9c9c9" stroke-width="2"/><path d="M4.5 9 H13.5" stroke="#c9c9c9" stroke-width="1.6"/></svg>
<svg style="left:1045px;top:477px;" width="18" height="24" viewBox="0 0 18 24"><path d="M1 23 H17 V9 L9 1 L1 9 Z" fill="#fff" stroke="#c9c9c9" stroke-width="2"/><path d="M4.5 15 H13.5" stroke="#c9c9c9" stroke-width="1.6"/></svg>
<svg style="left:1045px;top:614px;" width="18" height="24" viewBox="0 0 18 24"><path d="M1 1 H17 V15 L9 23 L1 15 Z" fill="#fff" stroke="#c9c9c9" stroke-width="2"/><path d="M4.5 9 H13.5" stroke="#c9c9c9" stroke-width="1.6"/></svg>
<svg style="left:1045px;top:697px;" width="18" height="24" viewBox="0 0 18 24"><path d="M1 23 H17 V9 L9 1 L1 9 Z" fill="#fff" stroke="#c9c9c9" stroke-width="2"/><path d="M4.5 15 H13.5" stroke="#c9c9c9" stroke-width="1.6"/></svg>
<svg style="left:959px;top:431px;" width="30" height="30" viewBox="0 0 30 30"><ellipse cx="16" cy="15" rx="12.5" ry="13.5" fill="#93c47d" transform="rotate(-30 16 15)"/><path d="M4 6 L24 28" stroke="#f0f0f0" stroke-width="3"/><circle cx="10" cy="19" r="5" fill="#f0f0f0" stroke="#8d9ba6" stroke-width="2.2"/><path d="M13.5 22.5 L17.5 26.5" stroke="#8d9ba6" stroke-width="2.6"/></svg>
<svg style="left:993px;top:431px;" width="30" height="30" viewBox="0 0 30 30"><ellipse cx="14" cy="16" rx="12.5" ry="13.5" fill="#93c47d" transform="rotate(-30 14 16)"/><path d="M4 4 L24 26" stroke="#f0f0f0" stroke-width="3"/><path d="M16 4 L22 10" stroke="#f0f0f0" stroke-width="6"/><path d="M14.5 7 L19 11.5 L26.5 2.5" fill="none" stroke="#4b4b4b" stroke-width="2.6"/></svg>
<svg style="left:958px;top:519px;" width="34" height="34" viewBox="0 0 34 34"><ellipse cx="14" cy="14" rx="12.5" ry="13" fill="#93c47d" transform="rotate(-30 14 14)"/><path d="M3 3 L22 24" stroke="#fcfaed" stroke-width="2.5"/><circle cx="19" cy="20" r="9" fill="#9fd4ec"/><path d="M21.8 17 A3.8 3.8 0 1 0 21.8 23" fill="none" stroke="#3d4248" stroke-width="2"/><path d="M22 24 L32 24 L27 30 Z" fill="#505050"/></svg>
<svg style="left:1002px;top:523px;" width="18" height="24" viewBox="0 0 18 24"><path d="M1 1 L17 12 L1 23 Z" fill="#59a869"/></svg>
<svg style="left:982px;top:610px;" width="18" height="24" viewBox="0 0 18 24"><path d="M1 1 L17 12 L1 23 Z" fill="#59a869"/></svg>
<svg style="left:3200px;top:125px;" width="24" height="30" viewBox="0 0 24 30"><path d="M6 16 L13.5 23.5 L31 6" fill="none" stroke="#68a672" stroke-width="5.2"/></svg>
<div style="left:3213px;top:565px;width:11px;height:3px;background:#c59bf0;"></div>
<div style="left:3213px;top:697px;width:11px;height:3px;background:#c59bf0;"></div>
<div style="left:1520px;top:62px;width:376px;height:52px;background:#ffffff;"></div>
<div style="left:1520px;top:110px;width:376px;height:6px;background:#4a7ec4;"></div>
<div class="t" style="left:963.6395px;top:76.01px;font-family:'Liberation Sans', sans-serif;font-size:22.6px;color:#2f7d1f;font-weight:normal;letter-spacing:0.599px;">application.yml</div>
<div class="t" style="left:1221.1355px;top:76.01px;font-family:'Liberation Sans', sans-serif;font-size:22.6px;color:#2f7d1f;font-weight:normal;letter-spacing:0.451px;">ProviderApplication.java</div>
<div class="t" style="left:1575.87px;top:76.01px;font-family:'Liberation Sans', sans-serif;font-size:22.6px;color:#2f7d1f;font-weight:normal;letter-spacing:0.401px;">ConsumerApplication.java</div>
<div class="t" style="left:1949.4915px;top:76.01px;font-family:'Liberation Sans', sans-serif;font-size:22.6px;color:#2f7d1f;font-weight:normal;letter-spacing:-0.004px;">Task.java</div>
<svg style="left:1137px;top:80px;" width="16" height="16" viewBox="0 0 16 16"><path d="M1.5 1.5 L14.5 14.5 M14.5 1.5 L1.5 14.5" stroke="#b9bdc2" stroke-width="1.9"/></svg>
<svg style="left:1490px;top:80px;" width="16" height="16" viewBox="0 0 16 16"><path d="M1.5 1.5 L14.5 14.5 M14.5 1.5 L1.5 14.5" stroke="#b9bdc2" stroke-width="1.9"/></svg>
<svg style="left:1864px;top:80px;" width="16" height="16" viewBox="0 0 16 16"><path d="M1.5 1.5 L14.5 14.5 M14.5 1.5 L1.5 14.5" stroke="#b9bdc2" stroke-width="1.9"/></svg>
<svg style="left:2061px;top:80px;" width="16" height="16" viewBox="0 0 16 16"><path d="M1.5 1.5 L14.5 14.5 M14.5 1.5 L1.5 14.5" stroke="#b9bdc2" stroke-width="1.9"/></svg>
<svg style="left:3212px;top:74px;" width="12" height="30" viewBox="0 0 12 30"><circle cx="6" cy="4" r="3.3" fill="#6e6e6e"/><circle cx="6" cy="15" r="3.3" fill="#6e6e6e"/><circle cx="6" cy="26" r="3.3" fill="#6e6e6e"/></svg>
<div class="t" style="left:52.869499999999995px;top:1313.17px;font-family:'Liberation Sans', sans-serif;font-size:23.4px;color:#000;font-weight:normal;letter-spacing:1.268px;">Run:</div>
<div class="t" style="left:180.6695px;top:1313.17px;font-family:'Liberation Sans', sans-serif;font-size:23.4px;color:#000;font-weight:normal;letter-spacing:1.167px;">ProviderApplication</div>
<div class="t" style="left:519.33px;top:1313.17px;font-family:'Liberation Sans', sans-serif;font-size:23.4px;color:#000;font-weight:normal;letter-spacing:1.179px;">ConsumerApplication</div>
<svg style="left:418px;top:1317px;" width="16" height="16" viewBox="0 0 16 16"><path d="M1.5 1.5 L14.5 14.5 M14.5 1.5 L1.5 14.5" stroke="#b9bdc2" stroke-width="1.9"/></svg>
<svg style="left:775px;top:1317px;" width="16" height="16" viewBox="0 0 16 16"><path d="M1.5 1.5 L14.5 14.5 M14.5 1.5 L1.5 14.5" stroke="#b9bdc2" stroke-width="1.9"/></svg>
<div style="left:456px;top:1346px;width:358px;height:5px;background:#9aa3b5;border-radius:2px;"></div>
<div class="t" style="left:124.83px;top:1367.47px;font-family:'Liberation Sans', sans-serif;font-size:23.4px;color:#000;font-weight:normal;letter-spacing:0.057px;">Console</div>
<div class="t" style="left:300.9415px;top:1367.47px;font-family:'Liberation Sans', sans-serif;font-size:23.4px;color:#000;font-weight:normal;letter-spacing:0.186px;">Actuator</div>
<div style="left:100px;top:1402px;width:137px;height:5px;background:#9aa3b5;"></div>
<div style="left:158px;top:1408px;width:3066px;height:550px;overflow:hidden;">
<div class="t m" style="left:22px;top:-13.02px;font-family:'Liberation Mono', monospace;font-size:28px;letter-spacing:-0.8px;color:#080808">2023-02-08 18:04:36.713  <span style="color:#2c7d1b">INFO</span> <span style="color:#a626b8">84850</span> --- [           main] <span style="color:#368b8b">org.apache.dubbo.config.ServiceConfig   </span> :  [DUBBO] Try to register interface application mapping for service dubbo-springboot-demo-consumer</div>
<div class="t m" style="left:22px;top:30.98px;font-family:'Liberation Mono', monospace;font-size:28px;letter-spacing:-0.8px;color:#080808">2023-02-08 18:04:36.713  <span style="color:#2c7d1b">INFO</span> <span style="color:#a626b8">84850</span> --- [           main] <span style="color:#368b8b">org.apache.dubbo.config.ServiceConfig   </span> :  [DUBBO] Successfully registered interface application mapping for service dubbo-springboot-demo</div>
<div class="t m" style="left:22px;top:74.98px;font-family:'Liberation Mono', monospace;font-size:28px;letter-spacing:-0.8px;color:#080808">2023-02-08 18:04:36.714  <span style="color:#2c7d1b">INFO</span> <span style="color:#a626b8">84850</span> --- [           main] <span style="color:#368b8b">.c.m.ConfigurableMetadataServiceExporter</span> :  [DUBBO] The MetadataService exports urls : [dubbo://30.221.128.96:20881/org.apache.dubbo.metadata</div>
<div class="t m" style="left:22px;top:118.98px;font-family:'Liberation Mono', monospace;font-size:28px;letter-spacing:-0.8px;color:#080808">2023-02-08 18:04:36.714  <span style="color:#2c7d1b">INFO</span> <span style="color:#a626b8">84850</span> --- [           main] <span style="color:#368b8b">o.a.d.r.c.m.ServiceInstanceMetadataUtils</span> :  [DUBBO] Start registering instance address to registry., dubbo version: 3.2.0-beta.4, current host</div>
<div class="t m" style="left:22px;top:162.98px;font-family:'Liberation Mono', monospace;font-size:28px;letter-spacing:-0.8px;color:#080808">2023-02-08 18:04:36.723  <span style="color:#a88a22">WARN</span> <span style="color:#a626b8">84850</span> --- [           main] <span style="color:#368b8b">o.a.d.r.client.AbstractServiceDiscovery </span> :  [DUBBO] No valid instance found, stop registering instance address to registry., dubbo version</div>
<div class="t m" style="left:22px;top:206.98px;font-family:'Liberation Mono', monospace;font-size:28px;letter-spacing:-0.8px;color:#080808">2023-02-08 18:04:36.724  <span style="color:#2c7d1b">INFO</span> <span style="color:#a626b8">84850</span> --- [           main] <span style="color:#368b8b">o.a.d.c.d.DefaultApplicationDeployer    </span> :  [DUBBO] Dubbo Application[1.1](dubbo-springboot-demo-consumer) is ready., dubbo version: 3.2.0</div>
<div class="t m" style="left:22px;top:250.98px;font-family:'Liberation Mono', monospace;font-size:28px;letter-spacing:-0.8px;color:#080808">2023-02-08 18:04:36.731  <span style="color:#2c7d1b">INFO</span> <span style="color:#a626b8">84850</span> --- [           main] <span style="color:#368b8b">o.a.d.s.d.consumer.ConsumerApplication  </span> : Started ConsumerApplication in 6.23 seconds (JVM running for 7.92)</div>
<div class="t m" style="left:22px;top:294.98px;font-family:'Liberation Mono', monospace;font-size:28px;letter-spacing:-0.8px;color:#080808">Receive result ======&gt; Hello world</div>
<div class="t m" style="left:22px;top:338.98px;font-family:'Liberation Mono', monospace;font-size:28px;letter-spacing:-0.8px;color:#080808">2023-02-08 18:04:36.780  <span style="color:#2c7d1b">INFO</span> <span style="color:#a626b8">84850</span> --- [pool-1-thread-1] <span style="color:#368b8b">.b.c.e.AwaitingNonWebApplicationListener</span> :  [Dubbo] Current Spring Boot Application is await...</div>
<div class="t m" style="left:22px;top:382.98px;font-family:'Liberation Mono', monospace;font-size:28px;letter-spacing:-0.8px;color:#080808">Wed Feb 08 18:04:37 CST 2023 Receive result ======&gt; Hello world</div>
<div class="t m" style="left:22px;top:426.98px;font-family:'Liberation Mono', monospace;font-size:28px;letter-spacing:-0.8px;color:#080808">Wed Feb 08 18:04:38 CST 2023 Receive result ======&gt; Hello world</div>
<div class="t m" style="left:22px;top:470.98px;font-family:'Liberation Mono', monospace;font-size:28px;letter-spacing:-0.8px;color:#080808">Wed Feb 08 18:04:39 CST 2023 Receive result ======&gt; Hello world</div>
</div>
<div style="left:160px;top:1682.5px;width:2468px;height:268.5px;background:transparent;border:6px solid #e5312a;border-radius:10px;box-sizing:border-box;box-shadow:1px 2px 3px rgba(0,0,0,0.25);"></div>
<svg style="left:1965px;top:19px;" width="31" height="26" viewBox="0 0 31 26"><ellipse cx="20" cy="6.5" rx="4.3" ry="6" fill="#6e6e6e"/><path d="M16.5 12 C22 13.5 28.8 14.5 29 18 L21 18 L16 15 Z" fill="#6e6e6e"/><g stroke="#f2f2f2" stroke-width="1.6" fill="#6e6e6e"><path d="M1.2 24.2 C1.4 19 5.5 16.8 10.3 15.8 C8.6 14 7.6 11.2 7.6 8 C7.6 3.5 9.9 0.9 12.9 0.9 C15.9 0.9 18.2 3.5 18.2 8 C18.2 11.2 17.2 14 15.5 15.8 C20.3 16.8 24.4 19 24.6 24.2 Z"/></g></svg>
<svg style="left:2000px;top:30px;" width="16" height="8" viewBox="0 0 16 8"><path d="M0 0 H16 L8.0 8 Z" fill="#6e6e6e"/></svg>
<div style="left:2032px;top:12px;width:2px;height:40px;background:#c6c6c6;"></div>
<svg style="left:2049px;top:17px;" width="32" height="30" viewBox="0 0 32 30"><path d="M1 11 L10 2 L20 2 L18 4 L15 7 L31 24 L26 29 L10 12 L6 16 Z" fill="#62a36c"/></svg>
<svg style="left:2123px;top:18.2px;" width="36" height="34" viewBox="0 0 36 34"><path d="M29 2 C27 8 21 12 14 13 C6 14 1.5 18 1.5 23 C1.5 25 3 26.5 5 26.5 L12 24.5 L17 14.5 L29.5 14.5 C29.8 10 29.6 5 29 2 Z" fill="#e3efdc"/><path d="M13 22 L17.5 14 L26.5 14 L31 22 L26.5 30 L17.5 30 Z" fill="#e0e3e6" stroke="#ffffff" stroke-width="2"/><path d="M19.2 19.5 A4.3 4.3 0 1 0 24.8 19.5" fill="none" stroke="#fff" stroke-width="2"/><path d="M22 16.5 V21.5" stroke="#fff" stroke-width="2"/><circle cx="27" cy="26" r="4.3" fill="#8fe07f" stroke="#9fb59b" stroke-width="0.8"/></svg>
<svg style="left:2401px;top:28px;" width="17" height="9" viewBox="0 0 17 9"><path d="M0 0 H17 L8.5 9 Z" fill="#6e6e6e"/></svg>
<svg style="left:2461px;top:17px;" width="30" height="30" viewBox="0 0 30 30"><path d="M15 27 A11 11 0 1 1 17 5.5" fill="none" stroke="#62a36c" stroke-width="4.2"/><path d="M16 0 L27 7 L16 14 Z" fill="#62a36c"/><rect x="15" y="19" width="10" height="10" fill="#6e6e6e"/></svg>
<svg style="left:2513px;top:17px;" width="26" height="30" viewBox="0 0 26 30"><path d="M7 1 L10.5 5 M19 1 L15.5 5" stroke="#62a36c" stroke-width="2.6"/><path d="M6 6 H20 C21.5 6 22 7 22 8 V20 C22 25 18 29 13 29 C8 29 4 25 4 20 V8 C4 7 4.5 6 6 6 Z" fill="#62a36c"/><path d="M0 10.5 H26 M0 17.5 H26 M0 24.5 H26" stroke="#62a36c" stroke-width="2.2"/><rect x="8.5" y="12.5" width="9" height="2.6" fill="#f2f2f2"/><rect x="8.5" y="18.5" width="9" height="2.6" fill="#f2f2f2"/></svg>
<svg style="left:2563px;top:19px;" width="32" height="30" viewBox="0 0 32 30"><path d="M1 4 C5 2 9 1 11 1 C13 1 17 2 21 4 V15 C21 21 16 25 11 27 C6 25 1 21 1 15 Z" fill="#6e6e6e"/><path d="M11 4 V24" stroke="#f2f2f2" stroke-width="2.5"/><rect x="13" y="6" width="6" height="20" fill="#f2f2f2" opacity="0"/><path d="M16.5 11 L30 19.5 L16.5 28.5 Z" fill="#62a36c" stroke="#f2f2f2" stroke-width="1"/></svg>
<svg style="left:2611px;top:18px;" width="32" height="31" viewBox="0 0 32 31"><path d="M13 25 A11.5 11.5 0 1 1 24.5 12.5" fill="none" stroke="#6e6e6e" stroke-width="3.2"/><path d="M13 7 V14 L9.5 17.5" fill="none" stroke="#6e6e6e" stroke-width="2.2"/><path d="M16.5 12 L30 20.5 L16.5 29.5 Z" fill="#62a36c" stroke="#f2f2f2" stroke-width="1"/></svg>
<svg style="left:2656px;top:30px;" width="16" height="8" viewBox="0 0 16 8"><path d="M0 0 H16 L8.0 8 Z" fill="#6e6e6e"/></svg>
<div style="left:2694px;top:22px;width:20px;height:20px;background:#d05b5e;"></div>
<div style="left:2706px;top:36px;width:11px;height:12px;background:#ffffff;"></div>
<div class="t" style="left:2707.5px;top:35.04px;font-family:'Liberation Sans', sans-serif;font-size:13px;color:#000;font-weight:normal;">2</div>
<div style="left:2736px;top:12px;width:2px;height:40px;background:#c6c6c6;"></div>
<svg style="left:2817px;top:20px;" width="24" height="23" viewBox="0 0 24 23"><path d="M22 2 L7 17" stroke="#4a9be0" stroke-width="4"/><path d="M1 7 V22 H16 Z" fill="#4a9be0"/></svg>
<svg style="left:2867px;top:20px;" width="28" height="23" viewBox="0 0 28 23"><path d="M2 11.5 L10.5 20 L26 4" fill="none" stroke="#62a36c" stroke-width="4.2"/></svg>
<svg style="left:2919px;top:21px;" width="24" height="24" viewBox="0 0 24 24"><path d="M2 22 L17 7" stroke="#62a36c" stroke-width="4"/><path d="M8 1 H23 V16 Z" fill="#62a36c"/></svg>
<svg style="left:2969px;top:17px;" width="30" height="30" viewBox="0 0 30 30"><circle cx="15" cy="15" r="12.5" fill="none" stroke="#c2c2c2" stroke-width="3.4"/><path d="M13.5 7 V15.5 L19 19" fill="none" stroke="#c2c2c2" stroke-width="2.6"/></svg>
<svg style="left:3023px;top:18px;" width="28" height="27" viewBox="0 0 28 27"><path d="M1 6 L9 0 V12 Z" fill="#6e6e6e"/><path d="M8 6 H17 A8.5 8.5 0 0 1 17 23 H8" fill="none" stroke="#6e6e6e" stroke-width="3.5"/></svg>
<div style="left:3068px;top:12px;width:2px;height:40px;background:#c6c6c6;"></div>
<svg style="left:3085px;top:17px;" width="35" height="31" viewBox="0 0 35 31"><path d="M0 4 H22 M11 0 V4 M4 7 C8 17 14 20 18 21 M18 6 C15 14 9 19 0.5 22" fill="none" stroke="#6e6e6e" stroke-width="2.6"/><path d="M16 29 L22.5 12 H25.5 L32 29 H28.5 L27 25 H21 L19.5 29 Z M22 22 H26 L24 16.5 Z" fill="#3a87e0" fill-rule="evenodd"/></svg>
<svg style="left:3139px;top:17px;" width="31" height="31" viewBox="0 0 31 31"><circle cx="12" cy="12" r="9.5" fill="none" stroke="#6e6e6e" stroke-width="3.5"/><path d="M18.5 18.5 L28.5 28.5" stroke="#6e6e6e" stroke-width="3.8"/></svg>
<svg style="left:3189px;top:15px;" width="35" height="34" viewBox="0 0 35 34"><circle cx="17" cy="17" r="16" fill="#e7a53b"/><path d="M17 8 L25 16 H19.5 V25 H14.5 V16 H9 Z" fill="#fff"/></svg>
<svg style="left:1642px;top:14px;" width="34" height="36" viewBox="0 0 34 36"><circle cx="14" cy="18" r="14" fill="#9fd4ec"/><path d="M16.6 13.8 A5.2 5.2 0 1 0 16.6 21.2" fill="none" stroke="#3d4248" stroke-width="2.4"/><path d="M20 0.5 L30.5 8 L20 15.5 Z" fill="#6cb14b"/><path d="M12 26 L16.5 18 L25.5 18 L30 26 L25.5 34 L16.5 34 Z" fill="#9ba6af"/><path d="M18.6 23.2 A4 4 0 1 0 23.4 23.2" fill="none" stroke="#b5dbef" stroke-width="1.7"/><path d="M21 21.2 V25.8" stroke="#b5dbef" stroke-width="1.7"/></svg>
<svg style="left:68px;top:76px;" width="28" height="26" viewBox="0 0 28 26"><rect x="1" y="1" width="26" height="24" fill="#f2f2f2" stroke="#aab1b9" stroke-width="2.5"/><rect x="4" y="7" width="20" height="15" fill="#a8d7ee"/><rect x="1" y="1" width="26" height="6" fill="#aab1b9"/></svg>
<svg style="left:217px;top:86px;" width="18" height="10" viewBox="0 0 18 10"><path d="M0 0 H18 L9.0 10 Z" fill="#777"/></svg>
<svg style="left:698px;top:74px;" width="24" height="28" viewBox="0 0 24 28"><rect x="0" y="0" width="24" height="4" fill="#737373"/><rect x="0" y="24" width="24" height="4" fill="#737373"/><path d="M5.5 12 L12 6 L18.5 12 Z M5.5 16 L12 22 L18.5 16 Z" fill="#737373"/></svg>
<svg style="left:750px;top:76px;" width="24" height="24" viewBox="0 0 24 24"><rect x="0" y="10" width="24" height="4" fill="#737373"/><path d="M5 0 H19 L12 6.5 Z M5 24 H19 L12 17.5 Z" fill="#737373"/></svg>
<div style="left:794px;top:68px;width:2px;height:40px;background:#c6c6c6;"></div>
<svg style="left:814px;top:74px;" width="28" height="28" viewBox="0 0 28 28"><g transform="translate(-814 -74)"><path d="M825.00 78.31 L825.42 75.26 L830.58 75.26 L831.00 78.31 L834.89 80.56 L837.74 79.39 L840.33 83.87 L837.89 85.75 L837.89 90.25 L840.33 92.13 L837.74 96.61 L834.89 95.44 L831.00 97.69 L830.58 100.74 L825.42 100.74 L825.00 97.69 L821.11 95.44 L818.26 96.61 L815.67 92.13 L818.11 90.25 L818.11 85.75 L815.67 83.87 L818.26 79.39 L821.11 80.56 Z" fill="#737373"/><circle cx="828" cy="88" r="10.40" fill="#737373"/><circle cx="828" cy="88" r="5.20" fill="#f2f2f2"/></g></svg>
<div style="left:868px;top:86px;width:24px;height:4px;background:#737373;"></div>
<div class="t" style="left:21.2px;top:152px;transform:rotate(-90deg);transform-origin:0 0;font-family:'Liberation Sans', sans-serif;font-size:23px;letter-spacing:0.28px;color:#000"><div class="t" style="position:relative;left:-1.90px;top:-13.34px">Project</div></div>
<div class="t" style="left:21.2px;top:308.7px;transform:rotate(-90deg);transform-origin:0 0;font-family:'Liberation Sans', sans-serif;font-size:23px;letter-spacing:0.16px;color:#000"><div class="t" style="position:relative;left:-1.15px;top:-13.34px">Commit</div></div>
<div class="t" style="left:21.2px;top:1706px;transform:rotate(-90deg);transform-origin:0 0;font-family:'Liberation Sans', sans-serif;font-size:23px;letter-spacing:0.47px;color:#000"><div class="t" style="position:relative;left:-1.03px;top:-13.34px">Structure</div></div>
<div class="t" style="left:21.2px;top:1898px;transform:rotate(-90deg);transform-origin:0 0;font-family:'Liberation Sans', sans-serif;font-size:23px;letter-spacing:0.08px;color:#000"><div class="t" style="position:relative;left:-1.90px;top:-13.34px">Bookmarks</div></div>
<svg style="left:10px;top:166px;" width="23" height="19" viewBox="0 0 23 19"><path d="M0 0 H9 L12 4 H23 V19 H0 Z" fill="#6b6b6b" transform="rotate(0)"/></svg>
<svg style="left:7px;top:321px;" width="28" height="18" viewBox="0 0 28 18"><circle cx="14" cy="9" r="6.3" fill="none" stroke="#6b6b6b" stroke-width="3.5"/><path d="M0 9 H7.5 M20.5 9 H28" stroke="#6b6b6b" stroke-width="3.5"/></svg>
<svg style="left:10px;top:1717px;" width="22" height="21" viewBox="0 0 22 21"><rect x="11" y="0" width="9" height="9" fill="#6b6b6b"/><rect x="0" y="11" width="9" height="9" fill="#6b6b6b"/><rect x="11" y="11" width="9" height="9" fill="#6b6b6b"/></svg>
<svg style="left:11px;top:1910px;" width="20" height="22" viewBox="0 0 20 22"><path d="M0 0 H20 V22 L10 13 L0 22 Z" fill="#6b6b6b"/></svg>
<svg style="left:925px;top:74.5px;" width="32" height="30" viewBox="0 0 32 30"><path d="M0.5 21 C1 13 7 9 15 7.5 C21 6.5 25 5 27.5 1.5 C29.5 7 28.5 14 24 18 C20 21.5 14 24 8 24 L4 25.5 L5 23 C3 23 1.5 22.5 0.5 21 Z" fill="#9ccb84"/><path d="M12.5 20.8 L16.9 12.8 L25.7 12.8 L30.1 20.8 L25.7 28.8 L16.9 28.8 Z" fill="#9ba6af"/><path d="M18.9 18 A4 4 0 1 0 23.7 18" fill="none" stroke="#fff" stroke-width="1.7"/><path d="M21.3 16 V20.6" stroke="#fff" stroke-width="1.7"/></svg>
<svg style="left:1183.6px;top:70.6px;" width="34" height="36" viewBox="0 0 34 36"><circle cx="14" cy="18" r="14" fill="#9fd4ec"/><path d="M16.6 13.8 A5.2 5.2 0 1 0 16.6 21.2" fill="none" stroke="#3d4248" stroke-width="2.4"/><path d="M20 0.5 L30.5 8 L20 15.5 Z" fill="#6cb14b"/><path d="M12 26 L16.5 18 L25.5 18 L30 26 L25.5 34 L16.5 34 Z" fill="#9ba6af"/><path d="M18.6 23.2 A4 4 0 1 0 23.4 23.2" fill="none" stroke="#b5dbef" stroke-width="1.7"/><path d="M21 21.2 V25.8" stroke="#b5dbef" stroke-width="1.7"/></svg>
<svg style="left:1538px;top:70.6px;" width="34" height="36" viewBox="0 0 34 36"><circle cx="14" cy="18" r="14" fill="#9fd4ec"/><path d="M16.6 13.8 A5.2 5.2 0 1 0 16.6 21.2" fill="none" stroke="#3d4248" stroke-width="2.4"/><path d="M20 0.5 L30.5 8 L20 15.5 Z" fill="#6cb14b"/><path d="M12 26 L16.5 18 L25.5 18 L30 26 L25.5 34 L16.5 34 Z" fill="#9ba6af"/><path d="M18.6 23.2 A4 4 0 1 0 23.4 23.2" fill="none" stroke="#b5dbef" stroke-width="1.7"/><path d="M21 21.2 V25.8" stroke="#b5dbef" stroke-width="1.7"/></svg>
<svg style="left:1911px;top:73.7px;" width="28" height="28" viewBox="0 0 28 28"><circle cx="14" cy="14" r="14" fill="#9fd4ec"/><path d="M18.2 10.2 A5.3 5.3 0 1 0 18.2 17.8" fill="none" stroke="#3d4248" stroke-width="2.4"/></svg>
<svg style="left:143px;top:1310px;" width="36" height="34" viewBox="0 0 36 34"><path d="M29 2 C27 8 21 12 14 13 C6 14 1.5 18 1.5 23 C1.5 25 3 26.5 5 26.5 L12 24.5 L17 14.5 L29.5 14.5 C29.8 10 29.6 5 29 2 Z" fill="#cadfc0"/><path d="M13 22 L17.5 14 L26.5 14 L31 22 L26.5 30 L17.5 30 Z" fill="#cdd1d6" stroke="#f2f2f2" stroke-width="2"/><path d="M19.2 19.5 A4.3 4.3 0 1 0 24.8 19.5" fill="none" stroke="#fff" stroke-width="2"/><path d="M22 16.5 V21.5" stroke="#fff" stroke-width="2"/><circle cx="27" cy="26" r="4.3" fill="#8fe07f" stroke="#9fb59b" stroke-width="0.8"/></svg>
<svg style="left:480px;top:1310px;" width="36" height="34" viewBox="0 0 36 34"><path d="M29 2 C27 8 21 12 14 13 C6 14 1.5 18 1.5 23 C1.5 25 3 26.5 5 26.5 L12 24.5 L17 14.5 L29.5 14.5 C29.8 10 29.6 5 29 2 Z" fill="#cadfc0"/><path d="M13 22 L17.5 14 L26.5 14 L31 22 L26.5 30 L17.5 30 Z" fill="#cdd1d6" stroke="#f2f2f2" stroke-width="2"/><path d="M19.2 19.5 A4.3 4.3 0 1 0 24.8 19.5" fill="none" stroke="#fff" stroke-width="2"/><path d="M22 16.5 V21.5" stroke="#fff" stroke-width="2"/><circle cx="27" cy="26" r="4.3" fill="#8fe07f" stroke="#9fb59b" stroke-width="0.8"/></svg>
<svg style="left:255px;top:1360px;" width="40" height="40" viewBox="0 0 40 40"><g fill="none" stroke="#e6a07b" stroke-width="2.3"><path d="M23.5 12 L12.5 27"/><path d="M24.5 12 L30 27"/><path d="M12.5 27 L8.5 16.5"/><path d="M30 27 L34 18.5"/></g><g fill="#e6a07b"><circle cx="24" cy="10.6" r="5"/><circle cx="12" cy="29" r="5"/><circle cx="30" cy="29" r="5"/></g></svg>
<svg style="left:56px;top:1366px;" width="30" height="30" viewBox="0 0 30 30"><path d="M13 25 A9.5 9.5 0 1 1 15 6" fill="none" stroke="#62a36c" stroke-width="3.8"/><path d="M14 0 L25 6.5 L14 13 Z" fill="#62a36c"/><rect x="15" y="17" width="10" height="10" fill="#6e6e6e"/></svg>
<svg style="left:56px;top:1418px;" width="29" height="28" viewBox="0 0 29 28"><path d="M3 25 L15 13" stroke="#6e6e6e" stroke-width="5" stroke-linecap="butt"/><path d="M14 14 A8 8 0 0 1 22 2 L17.5 7 L21 10.5 L26 6 A8 8 0 0 1 14 14 Z" fill="#6e6e6e"/><circle cx="19.5" cy="8.5" r="7.5" fill="#6e6e6e"/><path d="M19.5 8.5 L26 2" stroke="#f2f2f2" stroke-width="4"/></svg>
<div style="left:50px;top:1464px;width:40px;height:2px;background:#d0d0d0;"></div>
<div style="left:60px;top:1488px;width:20px;height:20px;background:#d05b5e;"></div>
<svg style="left:56px;top:1537px;" width="28" height="26" viewBox="0 0 28 26"><path d="M0 6 H7 L10 1 H18 L21 6 H28 V26 H0 Z" fill="#6e6e6e"/><circle cx="14" cy="15" r="5.5" fill="#f2f2f2"/><circle cx="14" cy="15" r="2.8" fill="#6e6e6e"/></svg>
<svg style="left:56px;top:1588px;" width="28" height="28" viewBox="0 0 28 28"><path d="M10 7 V1.5 H26.5 V26.5 H10 V21" fill="none" stroke="#6e6e6e" stroke-width="3"/><path d="M1 14 H14" stroke="#d9534f" stroke-width="3.2"/><path d="M11 7.5 L19 14 L11 20.5 Z" fill="#d9534f"/></svg>
<div style="left:50px;top:1634px;width:40px;height:2px;background:#d0d0d0;"></div>
<svg style="left:58px;top:1658px;" width="24" height="20" viewBox="0 0 24 20"><rect x="0" y="0" width="10.5" height="9" fill="#6e6e6e"/><rect x="13.5" y="0" width="10.5" height="9" fill="#6e6e6e"/><rect x="0" y="11.5" width="24" height="8.5" fill="#6e6e6e"/></svg>
<div style="left:50px;top:1700px;width:40px;height:2px;background:#d0d0d0;"></div>
<svg style="left:55px;top:1720px;" width="30" height="29" viewBox="0 0 30 29"><path d="M17 1 L29 13 L25 14.5 L20 19.5 L20.5 24 L18 26.5 L3 11.5 L5.5 9 L10 9.5 L15 4.5 Z" fill="#6e6e6e"/><path d="M1 28 L11 18" stroke="#6e6e6e" stroke-width="3"/></svg>
<svg style="left:117px;top:1426px;" width="22" height="25" viewBox="0 0 22 25"><path d="M11 3 V25" stroke="#6e6e6e" stroke-width="3.2"/><path d="M2 11.5 L11 2.5 L20 11.5" fill="none" stroke="#6e6e6e" stroke-width="3.2"/></svg>
<svg style="left:117px;top:1477px;" width="22" height="25" viewBox="0 0 22 25"><path d="M11 0 V22" stroke="#6e6e6e" stroke-width="3.2"/><path d="M2 13.5 L11 22.5 L20 13.5" fill="none" stroke="#6e6e6e" stroke-width="3.2"/></svg>
<svg style="left:115px;top:1529px;" width="26" height="28" viewBox="0 0 26 28"><path d="M0 2 H24 M0 11 H20 A5.5 5.5 0 0 1 20 22 H12" fill="none" stroke="#6e6e6e" stroke-width="3"/><path d="M0 22 H5" stroke="#6e6e6e" stroke-width="3"/><path d="M14 16 L8 22 L14 28 Z" fill="#6e6e6e"/></svg>
<div style="left:106px;top:1572px;width:44px;height:44px;background:#d9d9d9;border-radius:7px;"></div>
<svg style="left:115px;top:1580px;" width="26" height="25" viewBox="0 0 26 25"><path d="M0 4 H9 M0 12 H9 M0 22 H25" fill="none" stroke="#6e6e6e" stroke-width="3"/><path d="M17 0 V14" stroke="#6e6e6e" stroke-width="3"/><path d="M10.5 9 L17 16 L23.5 9 Z" fill="#6e6e6e"/></svg>
<svg style="left:114px;top:1634px;" width="28" height="27" viewBox="0 0 28 27"><rect x="6" y="0" width="16" height="6" fill="#6e6e6e"/><path d="M0 9 H28 V20 H22 V16 H6 V20 H0 Z" fill="#6e6e6e"/><path d="M7.5 17.5 H20.5 V25.5 H7.5 Z" fill="none" stroke="#6e6e6e" stroke-width="2.6"/><circle cx="23.5" cy="12" r="1.4" fill="#fff"/></svg>
<svg style="left:118px;top:1684px;" width="20" height="26" viewBox="0 0 20 26"><rect x="0" y="3" width="20" height="3" fill="#6e6e6e"/><rect x="6" y="0" width="8" height="3" fill="#6e6e6e"/><path d="M1.5 8 H18.5 L17.5 24 C17.5 25 16.5 26 15 26 H5 C3.5 26 2.5 25 2.5 24 Z" fill="#6e6e6e"/></svg>
<svg style="left:3150.5px;top:1310.5px;" width="27.0" height="27.0" viewBox="0 0 27.0 27.0"><g transform="translate(-3150.5 -1310.5)"><path d="M3161.12 1314.69 L3161.52 1311.75 L3166.48 1311.75 L3166.88 1314.69 L3170.63 1316.85 L3173.37 1315.72 L3175.85 1320.03 L3173.51 1321.84 L3173.51 1326.16 L3175.85 1327.97 L3173.37 1332.28 L3170.63 1331.15 L3166.88 1333.31 L3166.48 1336.25 L3161.52 1336.25 L3161.12 1333.31 L3157.37 1331.15 L3154.63 1332.28 L3152.15 1327.97 L3154.49 1326.16 L3154.49 1321.84 L3152.15 1320.03 L3154.63 1315.72 L3157.37 1316.85 Z" fill="#7a7a7a"/><circle cx="3164" cy="1324" r="10.00" fill="#7a7a7a"/><circle cx="3164" cy="1324" r="5.00" fill="#f2f2f2"/></g></svg>
<div style="left:3204px;top:1322px;width:20px;height:4px;background:#7a7a7a;"></div>
</body></html>
